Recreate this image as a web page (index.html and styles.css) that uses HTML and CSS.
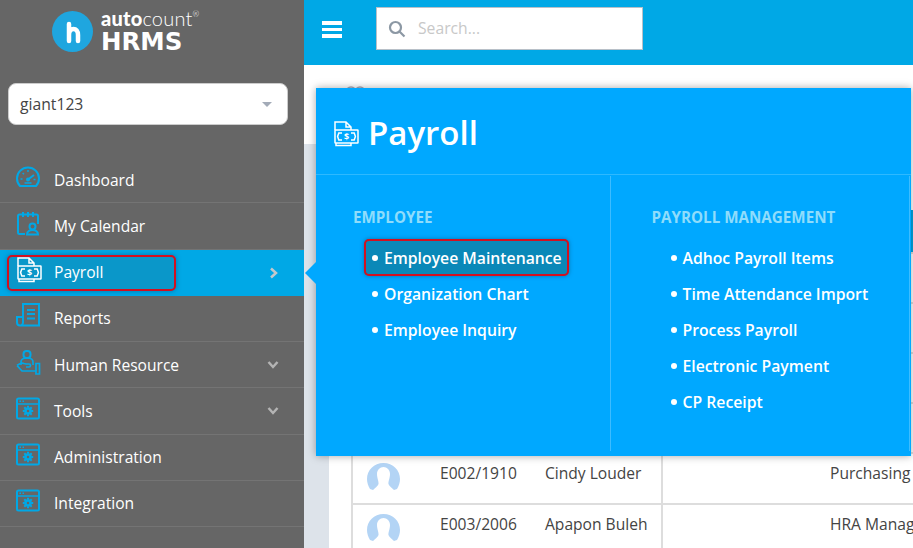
FILE: index.html
```html
<!DOCTYPE html>
<html lang="en">
<head>
<meta charset="utf-8">
<title>AutoCount HRMS</title>
<link rel="stylesheet" href="styles.css">
</head>
<body>
<div class="app">
  <svg class="defs" width="0" height="0"><defs>
    <g id="gearwin"><rect x="1" y="2.500" width="22" height="20" rx="1.500"/><path d="M1 8h22M3.500 5.300h1.500M6.500 5.300h1.500" stroke-width="1.600"/><circle cx="12" cy="15" r="2.500" stroke-width="2.500"/><path d="M12 9.800v2M12 18.200v2M6.800 15h2M15.200 15h2M8.300 11.300l1.400 1.400M14.300 17.300l1.400 1.400M8.300 18.700l1.400-1.400M14.300 12.700l1.400-1.400" stroke-width="2"/></g>
    <g id="cash"><path d="M2 9V1h11l5 5v3M13 1v5h5M3 22v2.500h15V22"/><rect x="2" y="9" width="23" height="13" rx=".5"/><path d="M9 12H5.800L4.600 15.500l1.200 3.500H9M18 12h3.200l1.200 3.500-1.200 3.500H18"/></g>
  </defs></svg>
  <aside class="sidebar">
    <div class="brand">
      <svg class="brand-mark" viewBox="0 0 41 41"><circle cx="20.500" cy="20.500" r="20.500" fill="#1fa6df"/><path d="M17 13v17M17 24c0-4 2-6 4.500-6s4.500 2 4.500 6v6" fill="none" stroke="#fff" stroke-width="4.500" stroke-linecap="round"/></svg>
      <div class="brand-text">
        <div class="brand-top"><b>auto</b>count<sup>®</sup></div>
        <div class="brand-name">HRMS</div>
      </div>
    </div>
    <div class="company"><span>giant123</span><i class="caret"></i></div>
    <nav class="nav">
      <a class="row">
        <svg class="ico" viewBox="0 0 24 24"><path d="M4 21a11 11 0 1 1 16 0z"/><path d="M12 14.500l6-4.500" /><circle cx="12" cy="14.500" r="1"/><path d="M4.500 14h2M17.500 14.500h2M12 5v2M6.700 8l1.200 1.200M8.500 18h7" stroke-width="1.500"/></svg>
        <span class="label">Dashboard</span>
      </a>
      <a class="row">
        <svg class="ico" viewBox="0 0 24 24"><path d="M9 23H3.500A1.500 1.500 0 0 1 2 21.500V5a1.500 1.500 0 0 1 1.500-1.500h17A1.500 1.500 0 0 1 22 5v8M7 1v5M12 1v5M17 1v5"/><circle cx="16.500" cy="15.500" r="3"/><path d="M11 23.500c0-6 11-6 11 0z"/></svg>
        <span class="label">My Calendar</span>
      </a>
      <a class="row active">
        <svg class="ico white" viewBox="0 0 24 24"><use href="#cash"/><text class="dollar" x="13.500" y="19">$</text></svg>
        <span class="label">Payroll</span>
        <svg class="chev" viewBox="0 0 10 12"><path d="M2 1.500 7 6l-5 4.500"/></svg>
      </a>
      <a class="row">
        <svg class="ico" viewBox="0 0 24 24"><path d="M7 14V1h16v21.500H4a3 3 0 0 1-3-3V14zM7 14v5.500a3 3 0 0 1-3 3M11 7h8M11 11h8M11 15.500h8"/></svg>
        <span class="label">Reports</span>
      </a>
      <a class="row">
        <svg class="ico" viewBox="0 0 24 24"><rect x="7.500" y="1" width="7" height="7" rx="3"/><path d="M5 15v-3c0-2.500 2-4 6-4s6 1.500 6 4v3M1 15.500c3-2.500 5-3 7-2l2 .5h3c2 0 2 3 0 3h-3M1 15.500l5 5.500h14M20 13.500h3.500V24H20z" stroke-width="1.700"/></svg>
        <span class="label">Human Resource</span>
        <svg class="chev down" viewBox="0 0 12 10"><path d="M1.500 2 6 7l4.500-5"/></svg>
      </a>
      <a class="row">
        <svg class="ico" viewBox="0 0 24 24"><use href="#gearwin"/></svg>
        <span class="label">Tools</span>
        <svg class="chev down" viewBox="0 0 12 10"><path d="M1.500 2 6 7l4.500-5"/></svg>
      </a>
      <a class="row">
        <svg class="ico" viewBox="0 0 24 24"><use href="#gearwin"/></svg>
        <span class="label">Administration</span>
      </a>
      <a class="row">
        <svg class="ico" viewBox="0 0 24 24"><use href="#gearwin"/></svg>
        <span class="label">Integration</span>
      </a>
    </nav>
  </aside>

  <main class="main">
    <header class="topbar">
      <div class="burger"><i></i><i></i><i></i></div>
      <div class="search">
        <svg class="search-ico" viewBox="0 0 18 18"><circle cx="7.500" cy="7.500" r="5.500"/><path d="m11.500 11.500 5 5"/></svg>
        <span class="placeholder">Search...</span>
      </div>
    </header>
    <div class="band">
      <svg class="band-ico" viewBox="0 0 20 8"><circle cx="6" cy="6" r="5"/><circle cx="15" cy="6" r="5"/></svg>
    </div>
    <section class="content">
      <div class="panel">
        <table class="grid">
          <colgroup><col class="c1"><col class="c2"></colgroup>
          <thead><tr><th colspan="2"></th></tr></thead>
          <tbody>
            <tr><td></td><td></td></tr>
            <tr><td></td><td></td></tr>
            <tr><td></td><td></td></tr>
            <tr><td></td><td></td></tr>
            <tr class="tall">
              <td><div class="person">
                <svg class="avatar" viewBox="0 0 33 28"><path d="M3 26C1 23 0 19 0 16 0 7 7 0 16.500 0S33 7 33 16c0 3-1 7-3 10l-3 1c-2-2-5-4-5.500-6-.5-2 1.500-6 1.500-10 0-4-3-7-6.500-7S10 7 10 11c0 4 2 8 1.500 10-.5 2-3.500 4-5.500 6z"/></svg>
                <span class="code">E002/1910</span><span class="name">Cindy Louder</span>
              </div></td>
              <td class="dept">Purchasing</td>
            </tr>
            <tr>
              <td><div class="person">
                <svg class="avatar" viewBox="0 0 33 28"><path d="M3 26C1 23 0 19 0 16 0 7 7 0 16.500 0S33 7 33 16c0 3-1 7-3 10l-3 1c-2-2-5-4-5.500-6-.5-2 1.500-6 1.500-10 0-4-3-7-6.500-7S10 7 10 11c0 4 2 8 1.500 10-.5 2-3.500 4-5.500 6z"/></svg>
                <span class="code">E003/2006</span><span class="name">Apapon Buleh</span>
              </div></td>
              <td class="dept">HRA Manager</td>
            </tr>
          </tbody>
        </table>
      </div>
    </section>
  </main>

  <div class="flyout">
    <i class="flyout-arrow"></i>
    <div class="flyout-head">
      <svg class="ico white head-ico" viewBox="0 0 24 24"><use href="#cash"/><text class="dollar" x="13.500" y="19">$</text></svg>
      <h1>Payroll</h1>
    </div>
    <div class="flyout-cols">
      <div class="col col-a">
        <h2>EMPLOYEE</h2>
        <ul>
          <li class="marked">Employee Maintenance</li>
          <li>Organization Chart</li>
          <li>Employee Inquiry</li>
        </ul>
      </div>
      <div class="col col-b">
        <h2>PAYROLL MANAGEMENT</h2>
        <ul>
          <li>Adhoc Payroll Items</li>
          <li>Time Attendance Import</li>
          <li>Process Payroll</li>
          <li>Electronic Payment</li>
          <li>CP Receipt</li>
        </ul>
      </div>
    </div>
  </div>
</div>
</body>
</html>
```
FILE: styles.css
```css
* { box-sizing: border-box; }
html, body { margin: 0; padding: 0; }
body { font-family: "Open Sans", "Noto Sans", sans-serif; color: #444; background: #dde3ea; }
.app { position: relative; display: grid; grid-template-columns: 304px 1fr; width: 913px; height: 548px; overflow: hidden; }
.defs { position: absolute; }

/* sidebar */
.sidebar { background: #666; color: #fff; height: 548px; }
.brand { display: flex; align-items: flex-start; height: 83px; padding: 11px 0 0 52px; gap: 8px; }
.brand-mark { width: 41px; height: 41px; flex: none; }
.brand-text { display: flex; flex-direction: column; }
.brand-top { margin-top: -2px; font-family: "Lato", sans-serif; font-size: 20px; font-weight: 300; line-height: 18px; letter-spacing: .2px; }
.brand-top b { font-weight: 900; }
.brand-top sup { font-size: 8px; line-height: 0; vertical-align: 9px; }
.brand-name { margin-top: 2px; font-family: "DejaVu Sans", sans-serif; font-size: 24.500px; font-weight: 700; line-height: 25px; }
.company { display: flex; align-items: center; justify-content: space-between; width: 280px; height: 42px; margin-left: 8px; padding: 0 15px 0 11px; background: #fff; border: 1px solid #ccc; border-radius: 8px; color: #444; font-size: 15.700px; }
.caret { width: 0; height: 0; border-left: 5px solid transparent; border-right: 5px solid transparent; border-top: 5px solid #a3abb8; }
.nav { display: flex; flex-direction: column; margin-top: 32px; }
.row { position: relative; display: flex; align-items: center; height: 46.250px; padding: 0 25px 0 16px; border-bottom: 1px solid #747474; font-size: 15.600px; color: #fff; }
.row > * { position: relative; }
.row.active { background: #00a8e6; border-bottom-color: #00a8e6; }
.row.active::before { content: ""; position: absolute; left: 7px; top: 5px; width: 165px; height: 32px; background: #0a97c9; border: 2px solid #d3101f; border-radius: 5px; box-sizing: content-box; box-shadow: 0 0 5px rgba(0, 70, 110, .5); }
.ico { width: 24px; height: 24px; margin-top: -6px; flex: none; overflow: visible; fill: none; stroke: #00a8e6; stroke-width: 2; }
.ico.white { stroke: #fff; stroke-width: 1.500; }
.dollar { font-size: 9px; font-weight: 700; fill: #fff; stroke: none; text-anchor: middle; }
.label { margin-left: 14px; flex: 1; }
.chev { width: 10px; height: 12px; margin-top: 1px; fill: none; stroke: #c4c8cc; stroke-width: 2.500; }
.chev.down { width: 12px; height: 10px; stroke: #b4b4b4; }

/* main */
.main { display: flex; flex-direction: column; min-width: 0; height: 548px; }
.topbar { display: flex; align-items: flex-start; height: 65px; flex: none; padding: 7px 0 0 18px; background: #00a8e6; }
.burger { display: flex; flex-direction: column; gap: 3px; width: 20px; margin-top: 14px; }
.burger i { display: block; height: 3.500px; background: #fff; }
.search { display: flex; align-items: center; width: 267px; height: 43px; margin-left: 34px; padding-left: 11px; background: #fff; border: 1px solid #b8c0c8; }
.search-ico { width: 18px; height: 18px; fill: none; stroke: #8c98a4; stroke-width: 2.200; }
.placeholder { margin: -2px 0 0 12px; font-size: 15.700px; color: #c8c8c8; }
.band { height: 79px; flex: none; padding: 21px 0 0 41px; background: #fff; }
.band-ico { display: block; width: 20px; height: 8px; fill: none; stroke: #aab; stroke-width: 1.500; }
.content { flex: 1; min-height: 0; padding-left: 25px; background: #dde3ea; overflow: hidden; }
.panel { height: 100%; padding: 66px 0 0 22px; background: #fff; }
.grid { width: 600px; border-collapse: collapse; table-layout: fixed; font-size: 15.600px; color: #444; }
.c1 { width: 310px; }
.grid th { height: 43px; padding: 0; background: #00a8e6; }
.grid td { height: 50px; padding: 0; vertical-align: top; border: 2px solid #ddd; }
.grid .tall td { height: 51px; }
.grid tr:last-child td { border-bottom: 0; }
.grid tr > td:last-child { border-right: 0; }
.person { display: flex; align-items: flex-start; height: 100%; padding: 9px 0 0 14px; }
.avatar { width: 33px; height: 28px; flex: none; fill: #b3d4f5; }
.code { width: 105px; margin-left: 40px; line-height: 20px; white-space: nowrap; }
.name { line-height: 20px; white-space: nowrap; }
.dept { padding: 9px 0 0 167px !important; line-height: 20px; white-space: nowrap; overflow: hidden; }

/* flyout */
.flyout { position: absolute; left: 316px; top: 88px; width: 595px; height: 368px; background: #00a8ff; color: #fff; box-shadow: 0 0 8px rgba(0, 0, 0, .35); }
.flyout-arrow { position: absolute; left: -11px; top: 174px; width: 0; height: 0; border-top: 11px solid transparent; border-bottom: 11px solid transparent; border-right: 11px solid #00a8ff; }
.flyout-head { display: flex; align-items: center; height: 87px; padding: 3px 0 0 17px; border-bottom: 1px solid #2eb9ff; }
.head-ico { width: 24px; height: 24px; margin-top: 0; }
.flyout-head h1 { margin: 0 0 0 11px; font-size: 33px; font-weight: 600; line-height: 46px; }
.flyout-cols { display: flex; height: 275px; margin-top: 1px; }
.col { height: 275px; padding-top: 31px; border-right: 1px solid #3dbcff; }
.col-a { width: 295px; padding-left: 37px; }
.col-b { width: 299px; padding-left: 40.500px; }
.col h2 { margin: 0 0 13px; font-size: 15.200px; font-weight: 700; line-height: 20px; color: #8fdcfb; }
.col ul { margin: 0; padding: 0 0 0 11px; list-style: none; }
.col-b ul { padding-left: 11px; }
.col li { display: flex; align-items: center; width: fit-content; height: 36px; padding: 0 7px 0 8px; font-size: 15.750px; font-weight: 600; white-space: nowrap; }
.col li::before { content: ""; width: 6px; height: 6px; margin-right: 6px; border-radius: 50%; background: #fff; }
.col li.marked { height: 37px; margin-top: -1px; padding-top: 1px; background: #0a88b8; border-radius: 5px; box-shadow: inset 0 0 0 2px #d3101f, 0 0 4px rgba(0, 80, 120, .6); }
```
